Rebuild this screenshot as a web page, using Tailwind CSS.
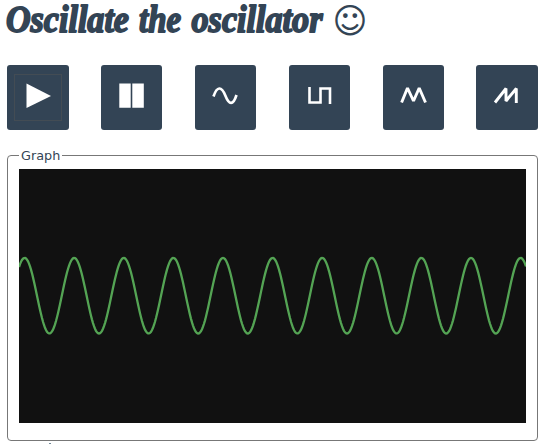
<!DOCTYPE html>
<html lang="en">
<head>
<meta charset="utf-8">
<title>Oscillate the oscillator</title>
<script src="https://cdn.jsdelivr.net/npm/@tailwindcss/browser@4"></script>
</head>
<body class="h-[444px] w-[558px] overflow-hidden bg-white font-['DejaVu_Sans',sans-serif] text-[#334455]">
<main class="flex flex-col pl-[7px]">
  <h1 class="h-[65px]">
    <svg class="-ml-[7px] block h-[50px] w-[400px] fill-[#334455] stroke-[#334455]" viewBox="0 0 400 50">
      <g class="font-['Liberation_Serif',serif] text-[37px] font-bold italic" stroke-width="1.8" stroke-linejoin="round">
        <text x="6" y="32" textLength="123" lengthAdjust="spacingAndGlyphs">Oscillate</text>
        <text x="139" y="32" textLength="42" lengthAdjust="spacingAndGlyphs">the</text>
        <text x="191.500" y="32" textLength="131" lengthAdjust="spacingAndGlyphs">oscillator</text>
      </g>
      <text x="332.500" y="33" class="font-['DejaVu_Sans',sans-serif] text-[35px]" stroke="none" textLength="35" lengthAdjust="spacingAndGlyphs">☺</text>
    </svg>
  </h1>
  <div class="flex h-[65px] w-[531px] gap-[33px]">
    <button aria-label="Play" class="-mr-px h-[65px] w-[62px] shrink-0 rounded-[3px] bg-[#334455] p-[7px]">
      <svg class="h-[51px] w-[48px]" viewBox="14 72 48 51"><rect x="14.5" y="74.5" width="47" height="46" fill="none" stroke="#555" stroke-dasharray="1 1"/><path d="M26.5 83.5L51 96L26.5 108Z" fill="#fff"/></svg>
    </button>
    <button aria-label="Pause" class="h-[65px] w-[61px] shrink-0 rounded-[3px] bg-[#334455]">
      <svg class="h-[65px] w-[61px]" viewBox="101 65 61 65"><path d="M119.3 83.5h11.4v24.3h-11.4zM132.3 83.5h11.5v24.3h-11.5z" fill="#fff"/></svg>
    </button>
    <button aria-label="Sine" class="h-[65px] w-[61px] shrink-0 rounded-[3px] bg-[#334455]">
      <svg class="h-[65px] w-[61px]" viewBox="195 65 61 65"><path d="M213.500 96.500C217 86 221.500 86 225.300 95.500S233 106 236.500 95" fill="none" stroke="#fff" stroke-width="2.7"/></svg>
    </button>
    <button aria-label="Square" class="h-[65px] w-[61px] shrink-0 rounded-[3px] bg-[#334455]">
      <svg class="h-[65px] w-[61px]" viewBox="289 65 61 65"><path d="M309.500 87V102.500H320.500V88.500H330V104" fill="none" stroke="#fff" stroke-width="2.6"/></svg>
    </button>
    <button aria-label="Triangle" class="h-[65px] w-[61px] shrink-0 rounded-[3px] bg-[#334455]">
      <svg class="h-[65px] w-[61px]" viewBox="383 65 61 65"><path d="M401.600 102.500L407.500 88L413.500 101L419.200 88L425.500 102.500" fill="none" stroke="#fff" stroke-width="2.9" stroke-linejoin="bevel"/></svg>
    </button>
    <button aria-label="Sawtooth" class="-ml-px h-[65px] w-[62px] shrink-0 rounded-[3px] bg-[#334455]">
      <svg class="h-[65px] w-[62px]" viewBox="476 65 62 65"><path d="M495 102.500L506 88.500V101L516.300 88.500V103" fill="none" stroke="#fff" stroke-width="2.9" stroke-linejoin="bevel"/></svg>
    </button>
  </div>
  <fieldset class="mt-[18px] h-[293px] w-[531px] rounded-[4px] border border-[#777] px-[11px]">
    <legend class="h-[15px] px-[2px] text-[12.8px] leading-[15px]">Graph</legend>
    <svg class="mt-[6px] block h-[254px] w-[507px] bg-[#111]" viewBox="19 169 507 254"><path id="wave" fill="none" stroke="#5cb55c" stroke-opacity="0.9" stroke-width="2.3"/></svg>
  </fieldset>
  <div class="ml-[42px] mt-[2px] h-px w-[2px] bg-[#6f8797]"></div>
</main>
<script>
  const pts = [];
  for (let x = 19; x <= 526; x++) {
    pts.push(x + ',' + (295.7 - 37.8 * Math.cos((x - 24.6) * 2 * Math.PI / 49.6)).toFixed(2));
  }
  document.getElementById('wave').setAttribute('d', 'M' + pts.join('L'));
</script>
</body>
</html>
